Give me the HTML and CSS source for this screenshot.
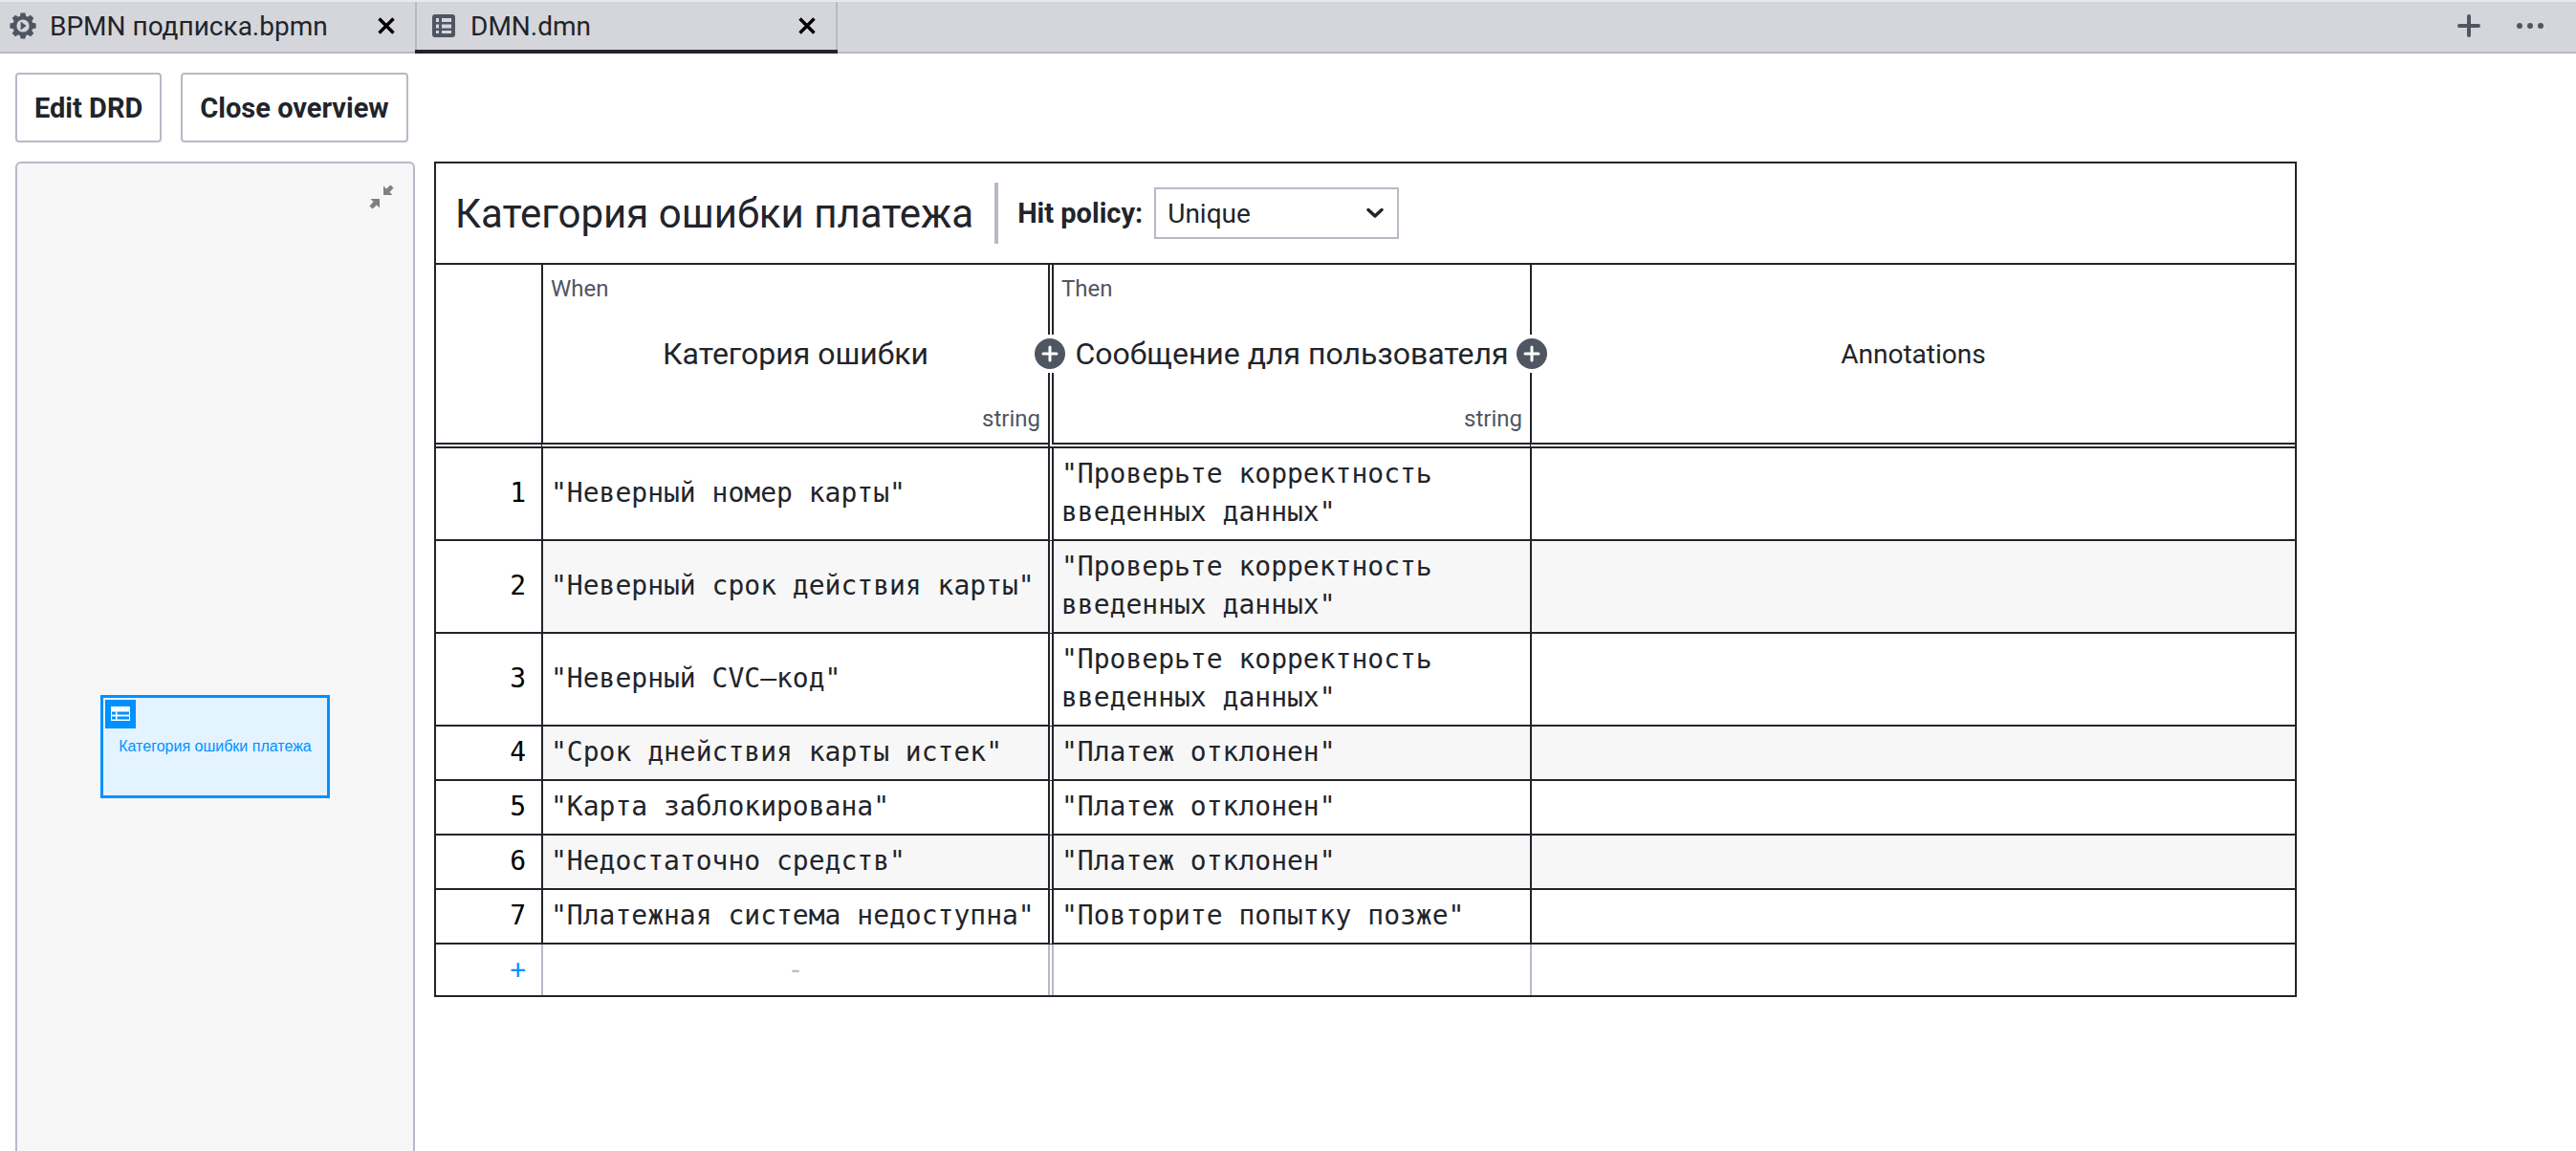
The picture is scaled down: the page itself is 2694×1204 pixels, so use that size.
FILE: index.html
```html
<!DOCTYPE html>
<html lang="ru">
<head>
<meta charset="utf-8">
<title>DMN.dmn</title>
<link rel="stylesheet" href="styles.css">
</head>
<body>
<header class="tabbar">
  <div class="tab">
    <svg class="tab-icon" viewBox="0 0 28 28" aria-hidden="true">
      <g fill="#505562">
        <g id="teeth">
          <path d="M11.6 0.4h4.8l1 5h-6.8z M11.6 27.6h4.8l1-5h-6.8z"/>
          <path d="M0.4 11.6v4.8l5 1v-6.8z M27.6 11.6v4.8l-5 1v-6.8z"/>
        </g>
        <use href="#teeth" transform="rotate(45 14 14)"/>
      </g>
      <circle cx="14" cy="14" r="8.6" fill="none" stroke="#505562" stroke-width="4"/>
      <path d="M11.6 9.6v8.8l6-4.4z" fill="#505562"/>
    </svg>
    <button class="tab-name" type="button">BPMN подписка.bpmn</button>
    <button class="tab-close" type="button" aria-label="Close tab"><svg viewBox="0 0 18 18"><path d="M1.500 1.500l15 15M16.500 1.500l-15 15" stroke="#000" stroke-width="3.400" fill="none"/></svg></button>
  </div>
  <div class="tab tab-active">
    <svg class="tab-icon" viewBox="0 0 28 28" aria-hidden="true">
      <rect x="2" y="2" width="24" height="24" rx="3" fill="#505562"/>
      <path d="M6 6h3v4H6zM12 6h10v4H12zM6 12.500h3v4H6zM12 12.500h10v4H12zM6 19h3v3H6zM12 19h10v3H12z" fill="#d5d6db"/>
    </svg>
    <button class="tab-name" type="button">DMN.dmn</button>
    <button class="tab-close" type="button" aria-label="Close tab"><svg viewBox="0 0 18 18"><path d="M1.500 1.500l15 15M16.500 1.500l-15 15" stroke="#000" stroke-width="3.400" fill="none"/></svg></button>
  </div>
  <div class="tab-actions">
    <button class="icon-button" type="button" aria-label="New file"><svg viewBox="0 0 24 24"><path d="M12 2v20M2 12h20" stroke="#505562" stroke-width="4" stroke-linecap="round"/></svg></button>
    <button class="icon-button more" type="button" aria-label="More"><svg viewBox="0 0 28 24" fill="#505562"><circle cx="3" cy="12" r="3"/><circle cx="14" cy="12" r="3"/><circle cx="25" cy="12" r="3"/></svg></button>
  </div>
</header>

<main class="editor">
  <div class="toolbar">
    <button class="tool-button" type="button">Edit DRD</button>
    <button class="tool-button" type="button">Close overview</button>
  </div>
  <div class="workspace">
    <aside class="overview">
      <button class="collapse" type="button" aria-label="Collapse overview">
        <svg viewBox="0 0 26 26" fill="#808080"><path d="M15 1.500v9.500h9.500l-3-3 4-4.500-3-3-4.500 4z"/><path d="M11 24.500v-9.500H1.500l3 3-4 4.500 3 3 4.500-4z"/></svg>
      </button>
      <div class="node">
        <svg class="node-icon" viewBox="0 0 32 30" aria-hidden="true">
          <rect width="32" height="30" fill="#0091ff"/>
          <rect x="6" y="7" width="20" height="15" fill="#fff"/>
          <path d="M7 12.500h4v3H7zM12.500 12.500H25v3H12.500zM7 17.500h4v3H7zM12.500 17.500H25v3H12.500z" fill="#0091ff"/>
        </svg>
        <span class="node-name">Категория ошибки платежа</span>
      </div>
    </aside>

    <section class="decision">
      <div class="decision-head">
        <h1 class="decision-name">Категория ошибки платежа</h1>
        <div class="hit-policy">
          <label class="hit-label" for="hit">Hit policy:</label>
          <div class="select-box">
            <select class="hit-select" id="hit"><option>Unique</option><option>First</option><option>Collect</option></select>
            <svg class="chevron" viewBox="0 0 18 12" aria-hidden="true"><path d="M2 2.500l7 6.500 7-6.500" fill="none" stroke="#22242a" stroke-width="3.400" stroke-linecap="round" stroke-linejoin="round"/></svg>
          </div>
        </div>
      </div>
      <table class="rules">
        <colgroup><col class="col-index"><col class="col-input"><col class="col-output"><col></colgroup>
        <thead>
          <tr>
            <th></th>
            <th class="clause">
              <div class="clause-body"><span class="clause-hint">When</span><span class="clause-name">Категория ошибки</span><span class="clause-hint clause-type">string</span></div>
              <button class="add-clause" type="button" aria-label="Add input"><svg viewBox="0 0 32 32"><circle cx="16" cy="16" r="16" fill="#505562"/><path d="M16 9v14M9 16h14" stroke="#fff" stroke-width="3" stroke-linecap="round"/></svg></button>
            </th>
            <th class="clause output">
              <div class="clause-body"><span class="clause-hint">Then</span><span class="clause-name">Сообщение для пользователя</span><span class="clause-hint clause-type">string</span></div>
              <button class="add-clause" type="button" aria-label="Add output"><svg viewBox="0 0 32 32"><circle cx="16" cy="16" r="16" fill="#505562"/><path d="M16 9v14M9 16h14" stroke="#fff" stroke-width="3" stroke-linecap="round"/></svg></button>
            </th>
            <th class="annotations">Annotations</th>
          </tr>
        </thead>
        <tbody>
          <tr><td class="index">1</td><td>"Неверный номер карты"</td><td class="output">"Проверьте корректность введенных данных"</td><td></td></tr>
          <tr><td class="index">2</td><td>"Неверный срок действия карты"</td><td class="output">"Проверьте корректность введенных данных"</td><td></td></tr>
          <tr><td class="index">3</td><td>"Неверный CVC–код"</td><td class="output">"Проверьте корректность введенных данных"</td><td></td></tr>
          <tr><td class="index">4</td><td>"Срок днействия карты истек"</td><td class="output">"Платеж отклонен"</td><td></td></tr>
          <tr><td class="index">5</td><td>"Карта заблокирована"</td><td class="output">"Платеж отклонен"</td><td></td></tr>
          <tr><td class="index">6</td><td>"Недостаточно средств"</td><td class="output">"Платеж отклонен"</td><td></td></tr>
          <tr><td class="index">7</td><td>"Платежная система недоступна"</td><td class="output">"Повторите попытку позже"</td><td></td></tr>
        </tbody>
        <tfoot>
          <tr><td class="index"><button class="add-rule" type="button">+</button></td><td class="blank">-</td><td class="output"></td><td></td></tr>
        </tfoot>
      </table>
    </section>
  </div>
</main>
</body>
</html>
```
FILE: styles.css
```css
* { box-sizing: border-box; }

body {
  margin: 0;
  height: 100vh;
  overflow: hidden;
  display: flex;
  flex-direction: column;
  background: #fff;
  color: #22242a;
  font-family: Roboto, "Noto Sans", sans-serif;
  font-size: 28px;
}

button {
  margin: 0;
  padding: 0;
  border: 0;
  background: none;
  color: inherit;
  font: inherit;
  cursor: pointer;
}

svg { display: block; }

/* Tab bar */
.tabbar {
  display: flex;
  height: 56px;
  flex: none;
  background: #d5d6db;
  border-top: 2px solid #e8e9ed;
  border-bottom: 2px solid #b7bac6;
}

.tab {
  position: relative;
  display: flex;
  align-items: center;
  width: 436px;
  padding: 0 20px 2px 10px;
  border-right: 2px solid #b7bac6;
}

.tab-active {
  width: 440px;
  padding-left: 14px;
}

.tab-active::after {
  content: "";
  position: absolute;
  left: -2px;
  right: -2px;
  bottom: -2px;
  height: 4px;
  background: #22242a;
}

.tab-icon {
  width: 28px;
  height: 28px;
  flex: none;
}

.tab-name {
  flex: 1;
  padding-left: 14px;
  text-align: left;
}

.tab-close {
  width: 20px;
  padding: 1px;
}

.tab-actions {
  display: flex;
  align-items: center;
  gap: 38px;
  margin-left: auto;
  padding: 0 34px 2px 0;
}

.icon-button { width: 24px; }
.more { width: 28px; }

/* Toolbar */
.editor {
  flex: 1;
  display: flex;
  flex-direction: column;
  gap: 20px;
  min-height: 0;
  padding: 20px 16px 0;
}

.toolbar {
  display: flex;
  gap: 20px;
}

.tool-button {
  height: 73px;
  padding: 0 18px;
  border: 2px solid #b7bac6;
  border-radius: 4px;
  font-size: 29px;
  font-weight: 700;
}

.workspace {
  flex: 1;
  display: flex;
  align-items: flex-start;
  gap: 20px;
  min-height: 0;
}

/* Overview canvas */
.overview {
  position: relative;
  align-self: stretch;
  flex: none;
  width: 418px;
  background: #f7f7f7;
  border: 2px solid #b7bac6;
  border-bottom: 0;
  border-radius: 6px 6px 0 0;
}

.collapse {
  position: absolute;
  top: 22px;
  right: 20px;
  width: 26px;
}

.node {
  position: absolute;
  top: 556px;
  left: 87px;
  display: flex;
  align-items: center;
  justify-content: center;
  width: 240px;
  height: 108px;
  background: #e3f3ff;
  border: 3px solid #0091ff;
}

.node-icon {
  position: absolute;
  top: 2px;
  left: 2px;
  width: 32px;
}

.node-name {
  color: #0091ff;
  font-family: "Liberation Sans", Arial, sans-serif;
  font-size: 16px;
}

/* Decision table */
.decision {
  flex: 1;
  max-width: 1948px;
  border: 2px solid #22242a;
}

.decision-head {
  display: flex;
  align-items: center;
  gap: 22px;
  height: 106px;
  padding: 0 20px;
  border-bottom: 2px solid #22242a;
}

.decision-name {
  margin: 0;
  font-size: 42px;
  font-weight: 400;
}

.hit-policy {
  display: flex;
  align-items: center;
  gap: 12px;
  height: 64px;
  padding-left: 20px;
  border-left: 4px solid #b7bac6;
}

.hit-label {
  font-size: 29px;
  font-weight: 700;
}

.select-box {
  display: grid;
  align-items: center;
  width: 256px;
}

.hit-select,
.chevron { grid-area: 1 / 1; }

.hit-select {
  height: 54px;
  padding: 0 12px;
  appearance: none;
  background: #fff;
  border: 2px solid #b7bac6;
  border-radius: 0;
  color: inherit;
  font: inherit;
}

.chevron {
  justify-self: end;
  width: 18px;
  margin-right: 16px;
  pointer-events: none;
}

.rules {
  width: 100%;
  table-layout: fixed;
  border-collapse: separate;
  border-spacing: 0;
}

.col-index { width: 110px; }
.col-input { width: 530px; }
.col-output { width: 504px; }

.rules th,
.rules td {
  padding: 8px;
  border-left: 2px solid #22242a;
  border-bottom: 2px solid #22242a;
}

.rules th {
  position: relative;
  height: 192px;
  border-bottom: 6px double #22242a;
  font-weight: 400;
}

.rules td {
  padding-top: 7px;
  font-family: "DejaVu Sans Mono", monospace;
  line-height: 40px;
}

.rules tr > :first-child { border-left: 0; }

.rules .output {
  border-left-width: 6px;
  border-left-style: double;
}

.clause-body {
  display: flex;
  flex-direction: column;
  justify-content: space-between;
  height: 170px;
  text-align: left;
}

.clause-name {
  font-size: 32px;
  text-align: center;
}

.clause-hint {
  color: #505562;
  font-size: 24px;
  line-height: 34px;
}

.clause-type { text-align: right; }

.add-clause {
  position: absolute;
  z-index: 1;
  top: 50%;
  right: -18px;
  width: 32px;
  padding: 4px 0;
  background: #fff;
  transform: translateY(-50%);
}

.rules tbody tr:nth-child(even) td:not(.index) { background: #f7f7f7; }

.rules .index {
  padding-right: 16px;
  color: #000;
  text-align: right;
}

.rules tfoot td {
  height: 53px;
  padding-bottom: 6px;
  padding-top: 6px;
  border-bottom: 0;
  border-left-color: #b7bac6;
}

.rules .blank {
  color: #b7bac6;
  text-align: center;
}

.add-rule { color: #0091ff; }
```
